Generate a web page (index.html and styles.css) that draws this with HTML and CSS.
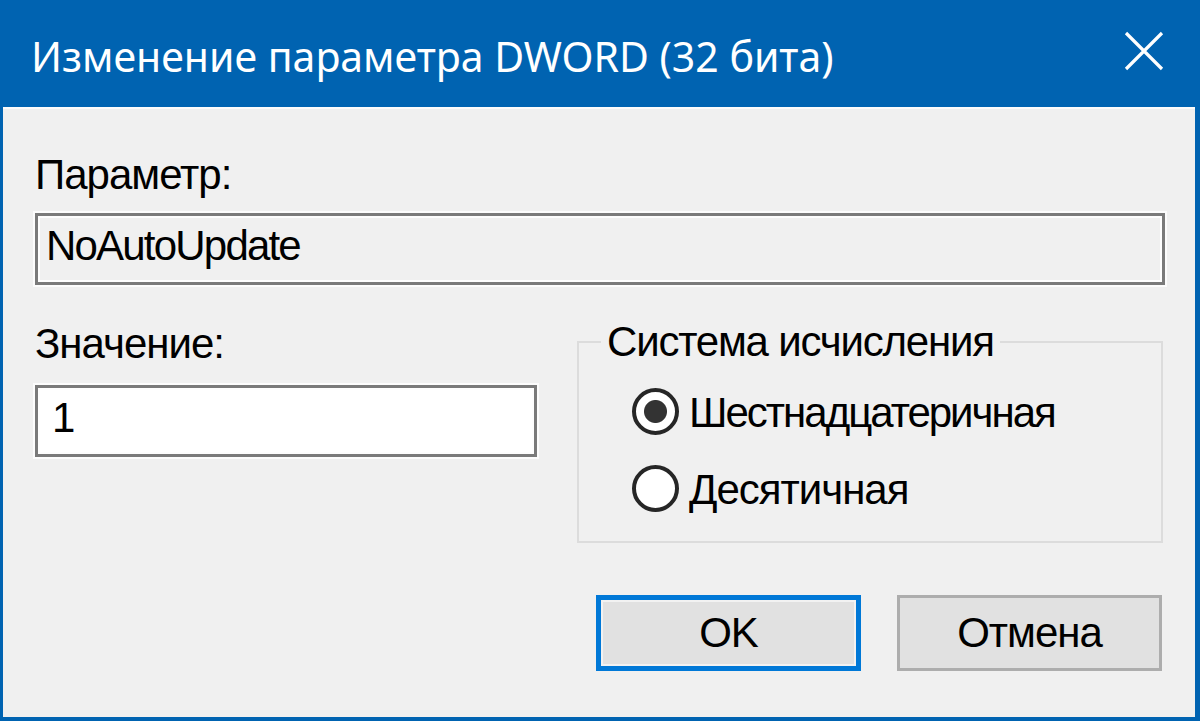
FILE: index.html
```html
<!DOCTYPE html>
<html lang="ru">
<head>
  <meta charset="UTF-8">
  <title>Изменение параметра DWORD (32 бита)</title>
  <link rel="stylesheet" href="styles.css">
</head>
<body>
  <div class="window">
    <div class="titlebar">
      <span class="title">Изменение параметра DWORD (32 бита)</span>
      <button class="close" aria-label="Закрыть">
        <svg width="40" height="40" viewBox="0 0 40 40">
          <path d="M2 2 L38 38 M38 2 L2 38" stroke="#fff" stroke-width="3.2" fill="none"/>
        </svg>
      </button>
    </div>

    <div class="content">
      <label class="label" for="name">Параметр:</label>
      <input class="field readonly" id="name" type="text" value="NoAutoUpdate" readonly>

      <div class="row">
        <div class="value-col">
          <label class="label" for="value">Значение:</label>
          <input class="field" id="value" type="text" value="1">
        </div>

        <fieldset class="group">
          <legend>Система исчисления</legend>
          <label class="radio">
            <input type="radio" name="base" checked>
            <span class="tight">Шестнадцатеричная</span>
          </label>
          <label class="radio">
            <input type="radio" name="base">
            <span>Десятичная</span>
          </label>
        </fieldset>
      </div>

      <div class="buttons">
        <button class="btn default">OK</button>
        <button class="btn">Отмена</button>
      </div>
    </div>
  </div>
</body>
</html>
```

FILE: styles.css
```css
body {
  margin: 0;
  font-family: 'Liberation Sans', Arial, sans-serif;
  color: #000;
  overflow: hidden;
}
.window {
  width: 1200px;
  height: 721px;
  box-sizing: border-box;
  background: #0063b1;
  display: flex;
  flex-direction: column;
}
.titlebar {
  height: 107px;
  flex-shrink: 0;
  display: flex;
  align-items: center;
  justify-content: space-between;
  padding: 0 36px 0 31px;
  color: white;
}
.title {
  font-family: 'Noto Sans', 'Open Sans', sans-serif;
  font-size: 41px;
  margin-top: 4px;
}
.close {
  background: none;
  border: none;
  padding: 0;
  margin-top: -6px;
  width: 40px;
  height: 40px;
}
.content {
  flex: 1;
  background: #f0f0f0;
  margin: 0 5px 4px 3px;
  border-top: 2px solid #fbfbfb;
  padding: 42px 30px 0 32px;
  display: flex;
  flex-direction: column;
  font-size: 42px;
}
.label {
  display: block;
  line-height: 48px;
  letter-spacing: -1px;
}
.field {
  display: block;
  box-sizing: border-box;
  height: 72px;
  margin: 14px 0 0;
  padding: 0 0 6px 8px;
  border: 3px solid #7a7a7a;
  box-shadow: 0 0 0 2px #fcfcfc, inset 0 0 0 2px #fdfdfd;
  background: #fff;
  font-family: inherit;
  font-size: 42px;
  letter-spacing: -1.8px;
  color: #000;
  outline: none;
}
.field.readonly {
  width: 100%;
  background: #f0f0f0;
}
.row {
  display: grid;
  grid-template-columns: 502px 1fr;
  gap: 40px;
  margin-top: 33px;
  align-items: start;
}
.value-col {
  padding-top: 2px;
}
.value-col .field {
  width: 100%;
  margin-top: 17px;
  padding-left: 14px;
}
.group {
  margin: 0 2px 0 0;
  padding: 17px 22px 25px;
  border: 2px solid #dcdcdc;
  display: flex;
  flex-direction: column;
  gap: 21px;
}
.group legend {
  padding: 0 6px;
  line-height: 48px;
  letter-spacing: -1.2px;
}
.radio {
  display: flex;
  align-items: center;
  height: 56px;
  margin-left: 31px;
  letter-spacing: -1px;
}
.radio span {
  padding-top: 4px;
}
.radio .tight {
  letter-spacing: -2px;
}
.radio input {
  appearance: none;
  margin: 0 10px 0 0;
  width: 47px;
  height: 47px;
  border: 4px solid #262626;
  border-radius: 50%;
  background: #fff;
  box-sizing: border-box;
}
.radio input:checked {
  background: radial-gradient(circle, #333 0 11px, #fff 12px);
}
.buttons {
  display: flex;
  justify-content: flex-end;
  gap: 36px;
  margin-top: 52px;
  padding-right: 3px;
}
.btn {
  width: 265px;
  height: 76px;
  box-sizing: border-box;
  background: #e1e1e1;
  border: 3px solid #adadad;
  font-family: inherit;
  font-size: 42px;
  letter-spacing: -1px;
  color: #000;
  padding: 0;
}
.btn.default {
  border: 5px solid #0078d7;
  box-shadow: inset 0 0 0 2px #f2f2f2;
}
```
